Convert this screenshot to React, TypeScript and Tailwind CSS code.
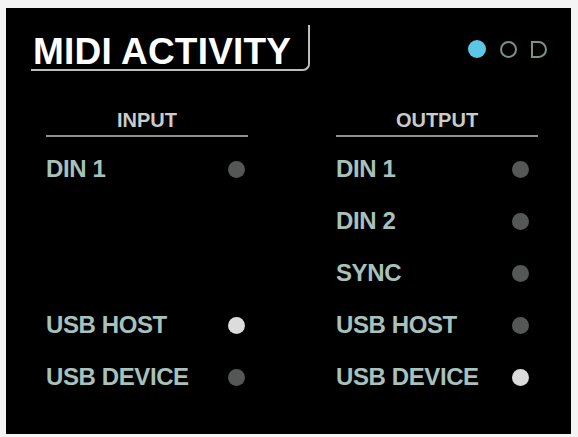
import React from "react";

type Row = { label: string; on: boolean } | null;

const inputs: Row[] = [
  { label: "DIN 1", on: false },
  null,
  null,
  { label: "USB HOST", on: true },
  { label: "USB DEVICE", on: false },
];

const outputs: Row[] = [
  { label: "DIN 1", on: false },
  { label: "DIN 2", on: false },
  { label: "SYNC", on: false },
  { label: "USB HOST", on: false },
  { label: "USB DEVICE", on: true },
];

function Column({ title, rows, dotPad }: { title: string; rows: Row[]; dotPad: string }) {
  return (
    <div className="w-[202px]">
      <div className="text-center text-[20px] font-bold leading-none text-[#c9cccb] pb-[5px]">{title}</div>
      <div className="h-[2px] bg-[#8d8f8f]" />
      <div className="mt-[6px]">
        {rows.map((r, i) => (
          <div key={i} className={`h-[52px] flex items-center justify-between ${dotPad}`}>
            {r && (
              <>
                <span className="text-[24px] font-bold tracking-[-0.4px] text-[#a7c1bd] leading-none">{r.label}</span>
                <span className={`w-[17px] h-[17px] rounded-full ${r.on ? "bg-[#dcdcdc]" : "bg-[#555656]"}`} />
              </>
            )}
          </div>
        ))}
      </div>
    </div>
  );
}

export default function App() {
  return (
    <div className="w-[578px] h-[437px] bg-[#f4f4f4] pt-[8px] pl-[6px]" style={{ fontFamily: '"Liberation Sans", Arial, sans-serif' }}>
      <div className="w-[565px] h-[426px] bg-black">
        <div className="flex items-start justify-between pt-[17px] pl-[25px] pr-[24px]">
          <div className="h-[46px] border-b-2 border-r-2 border-[#bdbdbd] rounded-br-[7px] pl-[2px] pt-[8px] w-[279px]">
            <span className="text-[37px] font-bold leading-none text-white tracking-[0.2px]">MIDI ACTIVITY</span>
          </div>
          <div className="flex items-center gap-[14px] mt-[15px]">
            <span className="w-[18px] h-[18px] rounded-full bg-[#5cc6e6]" />
            <span className="w-[17px] h-[17px] rounded-full border-2 border-[#7d9187]" />
            <span className="w-[16px] h-[17px] rounded-r-full rounded-l-[4px] border-2 border-[#7d9187]" />
          </div>
        </div>
        <div className="flex gap-[88px] pl-[40px] mt-[39px]">
          <Column title="INPUT" rows={inputs} dotPad="pr-[3px]" />
          <Column title="OUTPUT" rows={outputs} dotPad="pr-[9px]" />
        </div>
      </div>
    </div>
  );
}
